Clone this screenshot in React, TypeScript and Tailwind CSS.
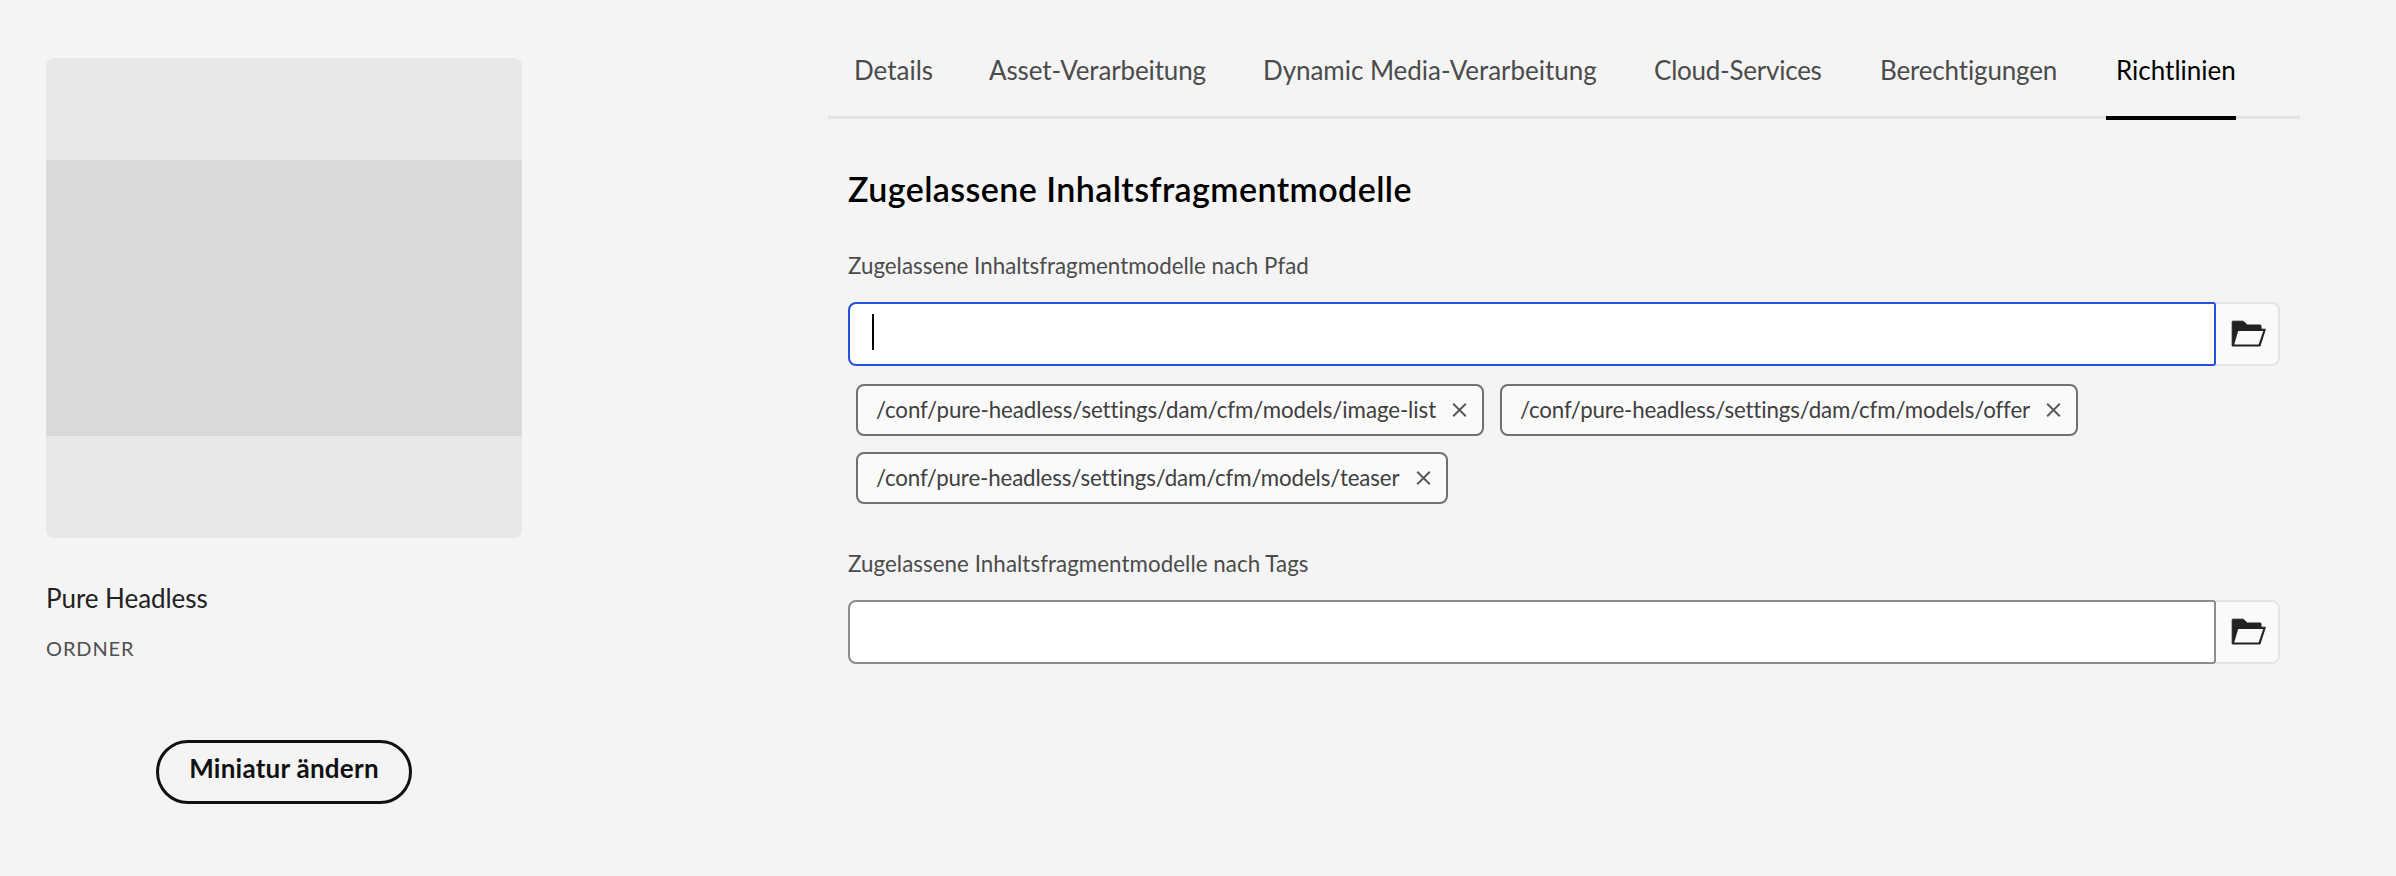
const tabs = [
  { label: "Details", cls: "w-[135px]" },
  { label: "Asset-Verarbeitung", cls: "w-[274px] tracking-[-0.13px]" },
  { label: "Dynamic Media-Verarbeitung", cls: "w-[391px] tracking-[-0.04px]" },
  { label: "Cloud-Services", cls: "w-[226px] tracking-[-0.24px]" },
  { label: "Berechtigungen", cls: "w-[236px] tracking-[-0.16px]" },
];

const paths = [
  { text: "/conf/pure-headless/settings/dam/cfm/models/image-list", cls: "w-[628px]", track: "tracking-[-0.08px]" },
  { text: "/conf/pure-headless/settings/dam/cfm/models/offer", cls: "w-[578px]", track: "tracking-[-0.13px]" },
  { text: "/conf/pure-headless/settings/dam/cfm/models/teaser", cls: "w-[592px]", track: "tracking-[-0.13px]" },
];

function FolderIcon() {
  return (
    <svg className="h-[28px] w-[36px]" viewBox="0 0 36 28">
      <path d="M1.2 26V1.8Q1.2 1.2 1.8 1.2H12.2L16.3 5H29.3Q30 5 30 5.8V9.2H34.4L29 26Z" fill="#222" stroke="#222" strokeWidth="1" strokeLinejoin="round" />
      <path d="M7.2 10.9H32.2L27.6 24.4H3.2Z" fill="#fafafa" />
    </svg>
  );
}

function CrossIcon() {
  return (
    <svg className="h-[14px] w-[15px] shrink-0" viewBox="0 0 15 14">
      <path d="M1.2 .8 13.8 13.2M13.8 .8 1.2 13.2" fill="none" stroke="#555" strokeWidth="1.9" />
    </svg>
  );
}

function PathField({ focused = false }: { focused?: boolean }) {
  return (
    <div className="flex h-16 w-[1432px]">
      <div
        className={
          focused
            ? "flex w-[1368px] rounded-l-[8px] rounded-r-[3px] border-2 border-[#2450dc] bg-white pt-2.5 pl-[22px]"
            : "flex w-[1368px] rounded-l-[8px] rounded-r-[3px] border-2 border-[#8c8c8c] bg-white pt-2.5 pl-[22px]"
        }
      >
        {focused && <span className="h-9 w-0.5 bg-black" />}
      </div>
      <button className="flex w-16 items-center justify-center rounded-r-[8px] border-2 border-l-0 border-[#e4e4e4] bg-[#fafafa] pl-[3px]">
        <FolderIcon />
      </button>
    </div>
  );
}

export default function App() {
  return (
    <div className="flex h-[876px] w-[2396px] overflow-hidden bg-[#f4f4f4] font-['Lato',sans-serif] [font-variant-ligatures:none]">
      <aside className="flex w-[828px] shrink-0 flex-col pt-[58px] pl-[46px]">
        <div className="flex h-[480px] w-[476px] flex-col justify-center rounded-[8px] bg-[#e8e8e8]">
          <div className="h-[276px] bg-[#d9d9d9]" />
        </div>
        <div className="mt-[40px] text-[26px] leading-[40px] tracking-[-0.05px] text-[#222]">Pure Headless</div>
        <div className="mt-[15px] text-[20px] leading-[30px] tracking-[0.9px] text-[#505050]">ORDNER</div>
        <button className="mt-[77px] ml-[110px] flex h-16 w-[256px] justify-center rounded-full border-[3px] border-[#111] pt-[5px] text-[26px] leading-[40px] font-bold tracking-[0.25px] text-[#111]">
          Miniatur ändern
        </button>
      </aside>
      <main className="flex w-[1472px] flex-col">
        <nav className="flex h-[119px] border-b-[3px] border-[#e3e3e3] pt-[50px] pl-[26px] text-[26px] leading-[40px] text-[#4b4b4b]">
          {tabs.map((t) => (
            <a key={t.label} className={t.cls}>{t.label}</a>
          ))}
          <a className="-ml-[10px] h-[70px] w-[130px] border-b-4 border-black pl-[10px] text-black">Richtlinien</a>
        </nav>
        <section className="flex flex-col pl-5">
          <h2 className="mt-[46px] text-[34px] leading-[48px] font-semibold tracking-[0.42px] text-black">Zugelassene Inhaltsfragmentmodelle</h2>
          <div className="mt-[35px] mb-[18px] text-[22.3px] leading-[36px] tracking-[0.02px] text-[#4b4b4b]">Zugelassene Inhaltsfragmentmodelle nach Pfad</div>
          <PathField focused />
          <div className="mt-[18px] ml-2 flex w-[1300px] flex-wrap gap-4">
            {paths.map((p) => (
              <div key={p.text} className={p.cls + " flex h-[52px] items-center justify-between rounded-[8px] border-2 border-[#707070] bg-[#fafafa] pr-[15px] pl-[18px]"}>
                <span className={p.track + " text-[22.3px] leading-[36px] text-[#404040]"}>{p.text}</span>
                <CrossIcon />
              </div>
            ))}
          </div>
          <div className="mt-[42px] mb-[18px] text-[22.3px] leading-[36px] tracking-[0.07px] text-[#4b4b4b]">Zugelassene Inhaltsfragmentmodelle nach Tags</div>
          <PathField />
        </section>
      </main>
    </div>
  );
}
